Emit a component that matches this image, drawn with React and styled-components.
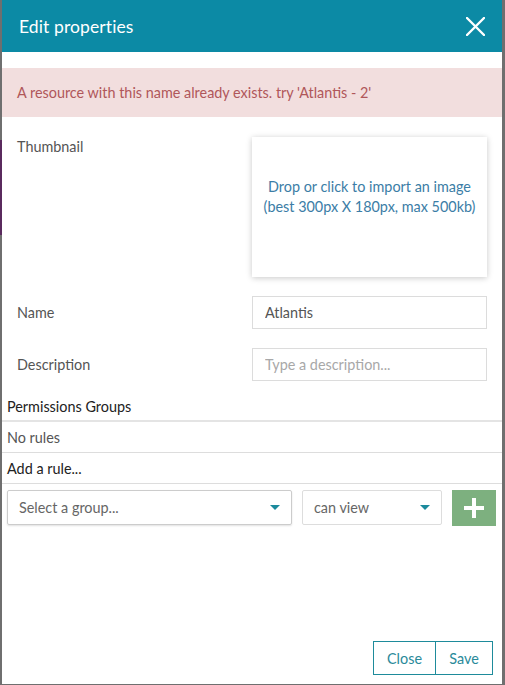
import React from "react";
import styled, { createGlobalStyle } from "styled-components";

const Global = createGlobalStyle`
  html, body { margin: 0; padding: 0; }
  body {
    background: #6f6f6f;
    font-family: "Lato", "Open Sans", sans-serif;
    width: 505px;
    height: 685px;
    overflow: hidden;
  }
`;

const Backdrop = styled.div`
  width: 505px;
  height: 685px;
  display: flex;
  padding: 0 3px 1px 2px;
  box-sizing: border-box;
  background-color: #6f6f6f;
  background-image: linear-gradient(#5a2a5e, #5a2a5e);
  background-size: 2px 95px;
  background-position: 0 140px;
  background-repeat: no-repeat;
`;

const Modal = styled.div`
  flex: 1;
  background: #fff;
  display: flex;
  flex-direction: column;
`;

const Header = styled.div`
  height: 52px;
  background: #0c8aa5;
  display: flex;
  align-items: center;
  justify-content: space-between;
  padding: 0 16px 0 17px;
  flex-shrink: 0;
`;

const Title = styled.h4`
  margin: 0;
  color: #fff;
  font-size: 17.5px;
  font-weight: 400;
  letter-spacing: 0.1px;
`;

const CloseIcon = styled.button`
  border: 0;
  background: none;
  padding: 0;
  width: 22px;
  height: 22px;
  display: flex;
  align-items: center;
  justify-content: center;
  cursor: pointer;
`;

const Body = styled.div`
  flex: 1;
  padding-top: 16px;
  display: flex;
  flex-direction: column;
`;

const Alert = styled.div`
  height: 49px;
  background: #f2dede;
  color: #b0575a;
  font-size: 14.4px;
  display: flex;
  align-items: center;
  padding: 0 15px;
  margin-bottom: 20px;
`;

const FormRow = styled.div`
  display: grid;
  grid-template-columns: 1fr 235px;
  padding: 0 15px;
  margin-bottom: ${(p) => p.$mb || 19}px;
  align-items: ${(p) => (p.$top ? "start" : "center")};
`;

const Label = styled.label`
  font-size: 14.4px;
  color: #555;
  padding-top: ${(p) => (p.$top ? 1 : 0)}px;
`;

const Dropzone = styled.div`
  height: 140px;
  box-sizing: border-box;
  padding-bottom: 20px;
  box-shadow: 0 1px 6px rgba(0, 0, 0, 0.22);
  display: flex;
  align-items: center;
  justify-content: center;
  text-align: center;
  color: #3b7da6;
  font-size: 14.4px;
  line-height: 20px;
`;

const Input = styled.input`
  height: 33px;
  box-sizing: border-box;
  border: 1px solid #dcdcdc;
  padding: 0 12px;
  font-family: inherit;
  font-size: 14.4px;
  color: #555;
  outline: none;
  &::placeholder { color: #a8a8a8; }
`;

const SectionTitle = styled.div`
  font-size: 14.4px;
  color: #222;
  padding: 0 5px;
  height: 28px;
  display: flex;
  align-items: center;
  border-bottom: 2px solid #e4e4e4;
  margin-top: -7px;
`;

const ListRow = styled.div`
  height: 30px;
  display: flex;
  align-items: center;
  padding: 0 5px;
  font-size: 14.4px;
  color: ${(p) => p.$color || "#555"};
  border-bottom: 1px solid #ddd;
`;

const RuleRow = styled.div`
  display: flex;
  gap: 10px;
  padding: 6px 5px 0 5px;
  align-items: flex-start;
`;

const Select = styled.div`
  width: ${(p) => p.$w}px;
  height: 35px;
  box-sizing: border-box;
  border: 1px solid ${(p) => (p.$focus ? "#ccc" : "#ddd")};
  box-shadow: ${(p) => (p.$focus ? "0 1px 2px rgba(0,0,0,0.12)" : "none")};
  border-radius: 2px;
  display: flex;
  align-items: center;
  justify-content: space-between;
  padding: 0 11px;
  font-size: 14.4px;
  color: #666;
`;

const Arrow = styled.span`
  width: 0;
  height: 0;
  border-left: 5px solid transparent;
  border-right: 5px solid transparent;
  border-top: 5px solid #1b8a9c;
`;

const AddButton = styled.button`
  width: 44px;
  height: 36px;
  border: 0;
  background: #7db07f;
  display: flex;
  align-items: center;
  justify-content: center;
  padding: 0;
`;

const Footer = styled.div`
  display: flex;
  justify-content: flex-end;
  padding: 0 9px 9px 0;
`;

const FooterButton = styled.button`
  height: 34px;
  width: ${(p) => p.$w}px;
  padding: 0;
  background: #fff;
  border: 1px solid #1e8b9b;
  margin-left: -1px;
  color: #2a8a9a;
  font-family: inherit;
  font-size: 14.4px;
  cursor: pointer;
`;

export default function App() {
  return (
    <>
      <Global />
      <Backdrop>
        <Modal>
          <Header>
            <Title>Edit properties</Title>
            <CloseIcon aria-label="close">
              <svg width="19" height="19" viewBox="0 0 19 19">
                <path d="M1 1 L18 18 M18 1 L1 18" stroke="#fff" strokeWidth="2.4" strokeLinecap="round" />
              </svg>
            </CloseIcon>
          </Header>
          <Body>
            <Alert>A resource with this name already exists. try 'Atlantis - 2'</Alert>
            <FormRow $top>
              <Label $top>Thumbnail</Label>
              <Dropzone>
                Drop or click to import an image
                <br />
                (best 300px X 180px, max 500kb)
              </Dropzone>
            </FormRow>
            <FormRow>
              <Label>Name</Label>
              <Input defaultValue="Atlantis" />
            </FormRow>
            <FormRow $mb={18}>
              <Label>Description</Label>
              <Input placeholder="Type a description..." />
            </FormRow>
            <SectionTitle>Permissions Groups</SectionTitle>
            <ListRow>No rules</ListRow>
            <ListRow $color="#222">Add a rule...</ListRow>
            <RuleRow>
              <Select $w={285} $focus>
                Select a group...
                <Arrow />
              </Select>
              <Select $w={140}>
                can view
                <Arrow />
              </Select>
              <AddButton aria-label="add">
                <svg width="22" height="22" viewBox="0 0 22 22">
                  <path d="M11 1 V21 M1 11 H21" stroke="#fff" strokeWidth="4" />
                </svg>
              </AddButton>
            </RuleRow>
          </Body>
          <Footer>
            <FooterButton $w={63}>Close</FooterButton>
            <FooterButton $w={58}>Save</FooterButton>
          </Footer>
        </Modal>
      </Backdrop>
    </>
  );
}
